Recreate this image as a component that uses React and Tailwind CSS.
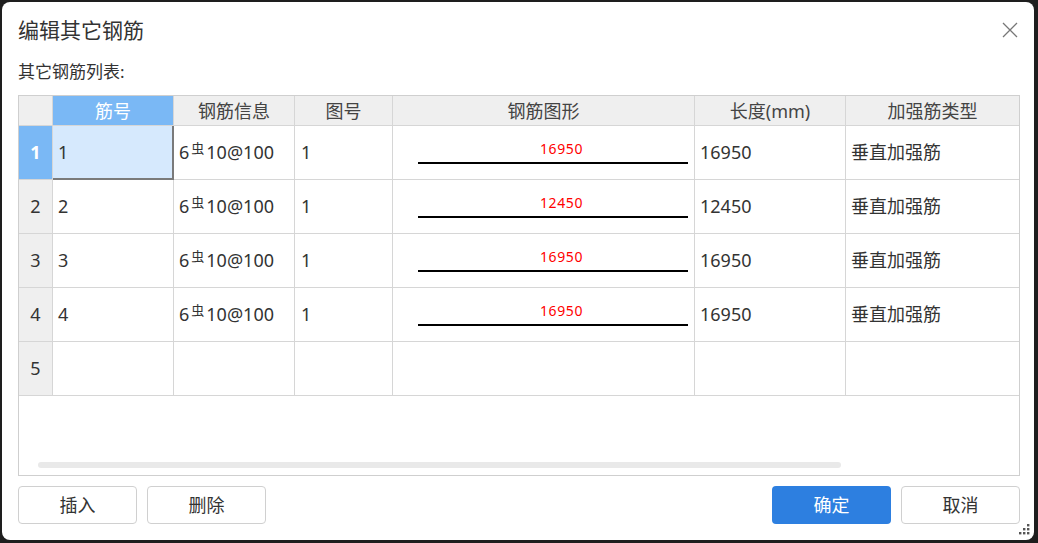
import React from "react";

const cols = ["w-[34px]", "w-[121px]", "w-[121px]", "w-[98px]", "w-[302px]", "w-[151px]", "w-[173px]"];

const rows = [
  { n: "1", len: "16950" },
  { n: "2", len: "12450" },
  { n: "3", len: "16950" },
  { n: "4", len: "16950" },
];

function Info() {
  return (
    <span className="inline-flex items-baseline">
      6<span className="text-[13px] relative -top-[6px] mx-[2px]" style={{ fontFamily: '"Noto Sans CJK SC", sans-serif' }}>虫</span>10@100
    </span>
  );
}

export default function App() {
  const font = { fontFamily: '"Noto Sans", "Noto Sans CJK SC", sans-serif' };
  return (
    <div className="w-[1038px] h-[543px] bg-[#1e1e1e] pt-[2px] pl-[2px]" style={font}>
      <div className="relative w-[1032px] h-[538px] bg-white rounded-[8px] flex flex-col pl-[16px] pr-[14px]">
        <div className="h-[56px] flex items-center justify-between">
          <span className="text-[21px] leading-[24px] text-[#333]">编辑其它钢筋</span>
          <svg width="16" height="16" viewBox="0 0 16 16" className="mr-[2px]">
            <path d="M1 1L15 15M15 1L1 15" stroke="#777" strokeWidth="1.3" />
          </svg>
        </div>
        <div className="mt-[4px] h-[20px] flex items-center text-[17px] text-[#333]">其它钢筋列表:</div>
        <div className="relative mt-[13px] h-[381px] border border-[#cfcfcf] flex flex-col">
          <div className="flex h-[30px] text-[18px] leading-[22px] text-[#444]">
            <div className={`${cols[0]} shrink-0 bg-[#efefef] border-r border-b border-[#d6d6d6]`} />
            <div className={`${cols[1]} shrink-0 bg-[#7ab8f5] text-white border-r border-b border-[#d6d6d6] flex items-center justify-center`}>筋号</div>
            <div className={`${cols[2]} shrink-0 bg-[#efefef] border-r border-b border-[#d6d6d6] flex items-center justify-center`}>钢筋信息</div>
            <div className={`${cols[3]} shrink-0 bg-[#efefef] border-r border-b border-[#d6d6d6] flex items-center justify-center`}>图号</div>
            <div className={`${cols[4]} shrink-0 bg-[#efefef] border-r border-b border-[#d6d6d6] flex items-center justify-center`}>钢筋图形</div>
            <div className={`${cols[5]} shrink-0 bg-[#efefef] border-r border-b border-[#d6d6d6] flex items-center justify-center`}>长度(mm)</div>
            <div className={`${cols[6]} shrink-0 bg-[#efefef] border-b border-[#d6d6d6] flex items-center justify-center`}>加强筋类型</div>
          </div>
          {rows.map((r, i) => (
            <div key={i} className="flex h-[54px] text-[18px] text-[#333]">
              <div
                className={`${cols[0]} shrink-0 ${i === 0 ? "bg-[#7ab8f5] text-white font-bold" : "bg-[#efefef]"} border-r border-b border-[#d6d6d6] flex items-center justify-center`}
              >
                {r.n}
              </div>
              <div
                className={`${cols[1]} shrink-0 ${i === 0 ? "bg-[#d6e9fd] border-r-2 border-b-2 border-[#7a7a7a]" : "border-r border-b border-[#d6d6d6]"} flex items-center pl-[5px]`}
              >
                {r.n}
              </div>
              <div className={`${cols[2]} shrink-0 border-r border-b border-[#d6d6d6] flex items-center pl-[5px]`}>
                <Info />
              </div>
              <div className={`${cols[3]} shrink-0 border-r border-b border-[#d6d6d6] flex items-center pl-[6px]`}>1</div>
              <div className={`${cols[4]} shrink-0 border-r border-b border-[#d6d6d6] flex flex-col pt-[15px]`}>
                <span className="ml-[147px] text-[14px] leading-[16px] tracking-[0.6px] text-[#ff0000]">{r.len}</span>
                <div className="ml-[25px] mt-[5px] w-[270px] h-[2px] bg-black" />
              </div>
              <div className={`${cols[5]} shrink-0 border-r border-b border-[#d6d6d6] flex items-center pl-[5px]`}>{r.len}</div>
              <div className={`${cols[6]} shrink-0 border-b border-[#d6d6d6] flex items-center pl-[5px]`}>垂直加强筋</div>
            </div>
          ))}
          <div className="flex h-[54px] text-[18px] text-[#333]">
            <div className={`${cols[0]} shrink-0 bg-[#efefef] border-r border-b border-[#d6d6d6] flex items-center justify-center`}>5</div>
            <div className={`${cols[1]} shrink-0 border-r border-b border-[#d6d6d6]`} />
            <div className={`${cols[2]} shrink-0 border-r border-b border-[#d6d6d6]`} />
            <div className={`${cols[3]} shrink-0 border-r border-b border-[#d6d6d6]`} />
            <div className={`${cols[4]} shrink-0 border-r border-b border-[#d6d6d6]`} />
            <div className={`${cols[5]} shrink-0 border-r border-b border-[#d6d6d6]`} />
            <div className={`${cols[6]} shrink-0 border-b border-[#d6d6d6]`} />
          </div>
          <div className="absolute left-[19px] bottom-[7px] w-[803px] h-[6px] rounded-full bg-[#e9e9e9]" />
        </div>
        <div className="mt-[10px] flex items-center justify-between text-[18px]">
          <div className="flex gap-[10px]">
            <button className="w-[119px] h-[38px] border border-[#d0d0d0] rounded-[4px] text-[#333] bg-white">插入</button>
            <button className="w-[119px] h-[38px] border border-[#d0d0d0] rounded-[4px] text-[#333] bg-white">删除</button>
          </div>
          <div className="flex gap-[10px]">
            <button className="w-[119px] h-[38px] rounded-[4px] text-white bg-[#2d7fe0]">确定</button>
            <button className="w-[119px] h-[38px] border border-[#d0d0d0] rounded-[4px] text-[#333] bg-white">取消</button>
          </div>
        </div>
        <svg className="absolute right-[3px] bottom-[4px]" width="12" height="12" viewBox="0 0 12 12">
          <rect x="8" y="0" width="2.4" height="2.4" fill="#555" />
          <rect x="4" y="4" width="2.4" height="2.4" fill="#555" />
          <rect x="8" y="4" width="2.4" height="2.4" fill="#555" />
          <rect x="0" y="8" width="2.4" height="2.4" fill="#555" />
          <rect x="4" y="8" width="2.4" height="2.4" fill="#555" />
          <rect x="8" y="8" width="2.4" height="2.4" fill="#555" />
        </svg>
      </div>
    </div>
  );
}
